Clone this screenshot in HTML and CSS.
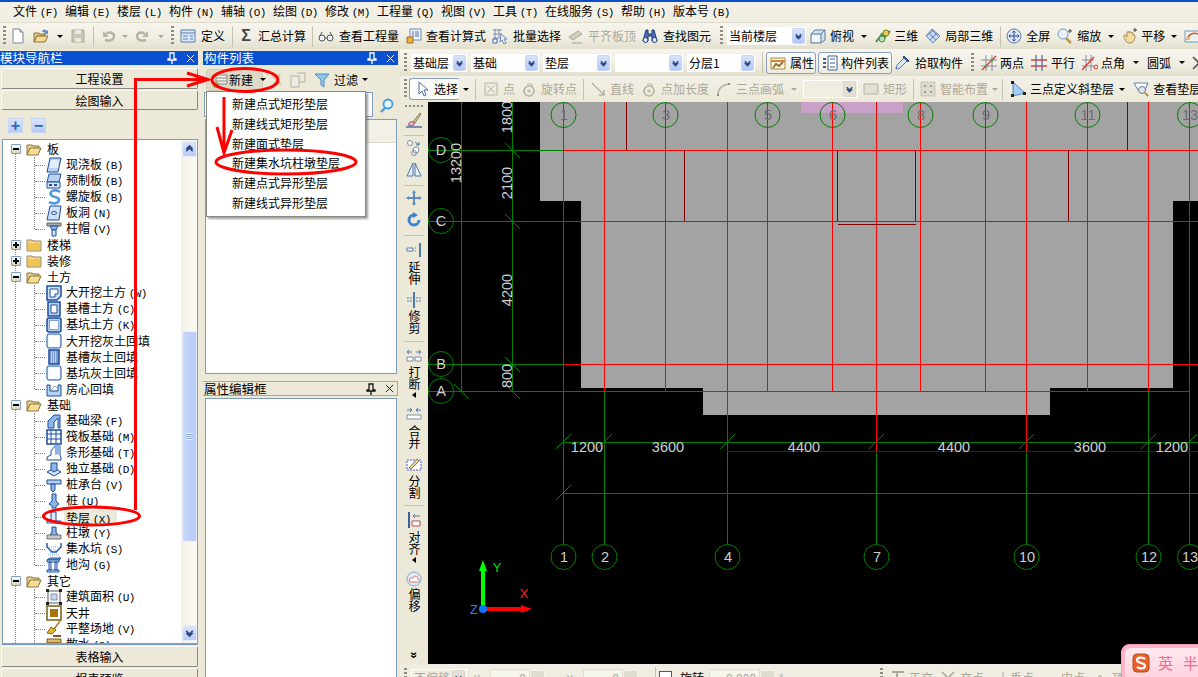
FILE: index.html
```html
<!DOCTYPE html>
<html lang="zh">
<head>
<meta charset="utf-8">
<title>模块导航栏</title>
<link rel="stylesheet" href="styles.css">
</head>
<body>
<svg class="defs" width="0" height="0">
  <defs>
    <symbol id="fo" viewBox="0 0 16 16"><path d="M1 14V4h5l1 1h6v3H4z" fill="#e9cf86" stroke="#8a7440"/><path d="M1 14l3-7h11l-3 7z" fill="#f7dd95" stroke="#8a7440"/></symbol>
    <symbol id="fc" viewBox="0 0 16 16"><path d="M1 14V3h5l1 1h8v10z" fill="#f4d98c" stroke="#9a8a60"/><path d="M2 6h12v7H2z" fill="#f2c552"/></symbol>
    <symbol id="chev" viewBox="0 0 12 12"><path d="M3 4l3 3 3-3M3 6l3 3 3-3" fill="none" stroke="#2d4a86" stroke-width="1.4"/></symbol>
    <symbol id="chup" viewBox="0 0 12 12"><path d="M3 6l3-3 3 3M3 8l3-3 3 3" fill="none" stroke="#2d4a86" stroke-width="1.4"/></symbol>
    <symbol id="pin" viewBox="0 0 10 12"><path d="M3 1h4v6h2v1H1V7h2zM5 8v4" fill="none" stroke="currentColor" stroke-width="1.3"/></symbol>
    <symbol id="cls" viewBox="0 0 10 10"><path d="M1 1l8 8M9 1L1 9" stroke="currentColor" fill="none"/></symbol>
    <symbol id="arc" viewBox="0 0 16 16"><circle cx="8" cy="10" r="5" fill="none" stroke="#b5b29f" stroke-width="1.6"/><path d="M6 3h5v3M6 10h4M8 8v4" stroke="#b5b29f" fill="none"/></symbol>
  </defs>
</svg>
<div class="app">
  <div class="menu">
    <span class="mi">文件 <span class="k">(F)</span></span>
    <span class="mi">编辑 <span class="k">(E)</span></span>
    <span class="mi">楼层 <span class="k">(L)</span></span>
    <span class="mi">构件 <span class="k">(N)</span></span>
    <span class="mi">辅轴 <span class="k">(O)</span></span>
    <span class="mi">绘图 <span class="k">(D)</span></span>
    <span class="mi">修改 <span class="k">(M)</span></span>
    <span class="mi mw3">工程量 <span class="k">(Q)</span></span>
    <span class="mi">视图 <span class="k">(V)</span></span>
    <span class="mi">工具 <span class="k">(T)</span></span>
    <span class="mi mw4">在线服务 <span class="k">(S)</span></span>
    <span class="mi">帮助 <span class="k">(H)</span></span>
    <span class="mi mw3">版本号 <span class="k">(B)</span></span>
  </div>

  <div class="tb tb1">
    <i class="grip ml3"></i>
    <svg class="ic ml4" viewBox="0 0 16 16"><path d="M3 1h7l3 3v11H3z" fill="#fff" stroke="#7a8694"/><path d="M10 1v3h3" fill="#dfe6ee" stroke="#7a8694"/></svg>
    <svg class="ic ml7" viewBox="0 0 16 16"><path d="M1 14V5h5l1 1h5v2H4z" fill="#e2c880" stroke="#8a7440"/><path d="M1 14l3-6h11l-3 6z" fill="#f5d98e" stroke="#8a7440"/><path d="M9 4c1-3 3-3 5-1l1-1v4h-4l1-1c-1-1-2-1-3-1z" fill="#5f8fcc"/></svg>
    <i class="caret ml8"></i>
    <svg class="ic ml8" viewBox="0 0 16 16"><path d="M2 2h12v12H2z" fill="#c9c7b8" stroke="#a9a796"/><path d="M5 2h6v4H5zM5 10h6v4H5z" fill="#e9e7dc"/></svg>
    <i class="sep ml7"></i>
    <svg class="ic ml7" viewBox="0 0 16 16"><path d="M4 12c6 2 9-1 9-4S8 3 5 6" fill="none" stroke="#b5b3a3" stroke-width="2.4"/><path d="M2 3v6h6z" fill="#b5b3a3"/></svg>
    <i class="caret off ml5"></i>
    <svg class="ic ml7" viewBox="0 0 16 16"><path d="M12 12c-6 2-9-1-9-4s5-5 8-2" fill="none" stroke="#b5b3a3" stroke-width="2.4"/><path d="M14 3v6H8z" fill="#b5b3a3"/></svg>
    <i class="caret off ml8"></i>
    <i class="grip ml8"></i>
    <span class="tool ml6 g5"><svg class="ic" viewBox="0 0 16 16"><path d="M1 2h14v12H1z" fill="#dce7f7" stroke="#5a7fb5"/><path d="M1 5h14M3 8h5M3 11h5M10 8h3M10 11h3" stroke="#5a7fb5" fill="none"/></svg><span>定义</span></span>
    <i class="sep ml7"></i>
    <span class="tool ml5"><span class="ic sigma">Σ</span><span>汇总计算</span></span>
    <i class="sep ml6"></i>
    <span class="tool ml5 g5"><svg class="ic" viewBox="0 0 16 16"><circle cx="4" cy="10" r="3" fill="#eef2f6" stroke="#555"/><circle cx="12" cy="10" r="3" fill="#eef2f6" stroke="#555"/><path d="M7 10h2M2 8l2-4M14 8l-2-4" stroke="#555" fill="none"/></svg><span>查看工程量</span></span>
    <span class="tool ml7"><svg class="ic" viewBox="0 0 16 16"><path d="M4 1h11v11H4z" fill="#eef3fa" stroke="#6d8cb8"/><path d="M6 4h2M9 4h4M6 6h2M9 6h4M6 8h2M9 8h4" stroke="#4e6fa5"/><path d="M1 9h6v6H1z" fill="#f0b040" stroke="#9c6a20"/></svg><span>查看计算式</span></span>
    <span class="tool ml6 g5"><svg class="ic" viewBox="0 0 16 16"><path d="M1 2h9M1 6h9M1 10h9M3 1v12M7 1v8" stroke="#7e8eb0" fill="none"/><path d="M1 11h4v4H1z" fill="#fff" stroke="#3c62b8"/><path d="M9 6l6 5h-3l2 4-2 1-2-4-2 2z" fill="#eaf1fb" stroke="#6d87b8"/></svg><span>批量选择</span></span>
    <span class="tool ml7 off"><svg class="ic" viewBox="0 0 16 16"><path d="M1 9l9-6 4 3-9 6z" fill="#d0cebf" stroke="#aca899"/><path d="M4 14h10v2H4z" fill="#c5c3b3"/></svg><span>平齐板顶</span></span>
    <span class="tool ml6 g5"><svg class="ic" viewBox="0 0 16 16"><path d="M4 2h2v4h4V2h2l3 11h-5V8H6v5H1z" fill="#4c6fb8" stroke="#213a78"/><circle cx="3.5" cy="12" r="2.5" fill="#dde7f8" stroke="#213a78"/><circle cx="12.5" cy="12" r="2.5" fill="#dde7f8" stroke="#213a78"/></svg><span>查找图元</span></span>
    <i class="grip ml9"></i>
    <span class="combo ml4 cw79">当前楼层<b><svg viewBox="0 0 12 12"><use href="#chev"/></svg></b></span>
    <span class="tool ml4"><svg class="ic" viewBox="0 0 16 16"><path d="M1 6l4-4h10v10l-4 3H1z" fill="#cfe0f2" stroke="#627d99"/><path d="M1 6h10v9M11 6l4-4" fill="none" stroke="#627d99"/><path d="M2 7h8v7H2z" fill="#eef5fb"/></svg><span>俯视</span></span>
    <i class="caret ml7"></i>
    <span class="tool ml9 g3"><svg class="ic" viewBox="0 0 16 16"><path d="M1 14l6-8 3 3 5-6" fill="none" stroke="#4a8f4a" stroke-width="2"/><circle cx="11" cy="5" r="3" fill="#e8cf50" stroke="#8a7a20"/><circle cx="7" cy="11" r="3" fill="#b9dcb0" stroke="#4a8f4a"/></svg><span>三维</span></span>
    <span class="tool ml7"><svg class="ic" viewBox="0 0 16 16"><path d="M1 8l6-7 8 7-7 7z" fill="#c7d8ef" stroke="#6a88b4"/><path d="M4 5l7 7M7 2l6 6M1 8l8-6M5 12l7-7" stroke="#6a88b4"/></svg><span>局部三维</span></span>
    <i class="sep ml7"></i>
    <span class="tool ml5"><svg class="ic" viewBox="0 0 16 16"><circle cx="8" cy="8" r="7" fill="#dce6f4" stroke="#5d79a8"/><path d="M8 3v10M3 8h10M6.5 4.500L8 3l1.500 1.500M6.500 11.500L8 13l1.500-1.500M4.500 6.500L3 8l1.500 1.500M11.500 6.500L13 8l-1.500 1.500" stroke="#2d4a86" fill="none"/></svg><span>全屏</span></span>
    <span class="tool ml7"><svg class="ic" viewBox="0 0 16 16"><circle cx="6" cy="6" r="5" fill="#e8f0fb" stroke="#7c96bd"/><path d="M9 10l5 5" stroke="#c9923c" stroke-width="2.500"/><path d="M13 1v4M11 3h4" stroke="#444"/></svg><span>缩放</span></span>
    <i class="caret ml7"></i>
    <span class="tool ml9 g3"><svg class="ic" viewBox="0 0 16 16"><path d="M2 9c-1-2 1-3 2-1l1 1V5c0-2 2-2 2 0 0-2 2-2 2 0 0-1 2-1 2 0v2c2-1 2 1 2 1 0 4-2 7-5 7-4 0-5-3-6-6z" fill="#f0dca4" stroke="#a58a4c"/><path d="M13 0v4M11 2h4" stroke="#444"/></svg><span>平移</span></span>
    <i class="caret ml6"></i>
    <svg class="ic ml8" viewBox="0 0 16 16"><path d="M1 3h14v11H1z" fill="#eaf5ef" stroke="#6a9ec0"/><path d="M3 12c1-6 7-8 11-6" fill="none" stroke="#d85a3c" stroke-width="1.500"/><path d="M3 12h3v-3H3z" fill="#e8c040"/></svg>
  </div>

  <div class="main">
    <aside class="nav">
      <div class="cap"><span class="cap-t">模块导航栏</span><svg class="pin" viewBox="0 0 10 12"><use href="#pin"/></svg><svg class="cls" viewBox="0 0 10 10"><use href="#cls"/></svg></div>
      <div class="navbtn nb-first">工程设置</div>
      <div class="navbtn nb-second">绘图输入</div>
      <div class="treetb">
        <span class="sq">+</span>
        <span class="sq">−</span>
      </div>
      <div class="treebox">
        <div class="tree">
          <div class="node"><i class="exp"></i><svg class="ic fold"><use href="#fo"/></svg><span>板</span></div>
          <div class="kids">
            <div class="leaf"><svg class="ic" viewBox="0 0 16 16"><path d="M4 1h11l-3 14H1z" fill="#bcd2f2" stroke="#1a4e9e"/><path d="M5 3h8l-1 8H3z" fill="#e3eefc"/></svg><span>现浇板 <span class="k">(B)</span></span></div>
            <div class="leaf"><svg class="ic" viewBox="0 0 16 16"><path d="M3 1h12l-2 8H1z" fill="#bcd2f2" stroke="#1a4e9e"/><path d="M1 9h13v6H1z" fill="#dce9fa" stroke="#1a4e9e"/><path d="M3 11h3v2H3zM8 11h3v2H8z" fill="#1a4e9e"/></svg><span>预制板 <span class="k">(B)</span></span></div>
            <div class="leaf"><svg class="ic" viewBox="0 0 16 16"><path d="M14 3C8-1 3 3 5 6s8 1 8 5-7 4-10 2" fill="none" stroke="#4f9be0" stroke-width="2.600"/></svg><span>螺旋板 <span class="k">(B)</span></span></div>
            <div class="leaf"><svg class="ic" viewBox="0 0 16 16"><path d="M4 1h11l-2 14H1z" fill="#cfe0f7" stroke="#1a4e9e"/><ellipse cx="8" cy="8" rx="2.500" ry="1.500" fill="#fff" stroke="#1a4e9e"/></svg><span>板洞 <span class="k">(N)</span></span></div>
            <div class="leaf"><svg class="ic" viewBox="0 0 16 16"><path d="M1 2h14v3H1z" fill="#a9a9a9" stroke="#666"/><path d="M4 5h8l-2 4H6z" fill="#8fb4e8" stroke="#1a4e9e"/><path d="M6 9h4v6H6z" fill="#cfe0f7" stroke="#1a4e9e"/></svg><span>柱帽 <span class="k">(V)</span></span></div>
          </div>
          <div class="node"><i class="exp plus"></i><svg class="ic fold"><use href="#fc"/></svg><span>楼梯</span></div>
          <div class="node"><i class="exp plus"></i><svg class="ic fold"><use href="#fc"/></svg><span>装修</span></div>
          <div class="node"><i class="exp"></i><svg class="ic fold"><use href="#fo"/></svg><span>土方</span></div>
          <div class="kids">
            <div class="leaf"><svg class="ic" viewBox="0 0 16 16"><path d="M1 1h14v10l-4 4H1z" fill="#cfe0f7" stroke="#1a4e9e" stroke-width="1.500"/><path d="M4 4h8v5H9v3H4z" fill="#fff" stroke="#1a4e9e"/></svg><span>大开挖土方 <span class="k">(W)</span></span></div>
            <div class="leaf"><svg class="ic" viewBox="0 0 16 16"><path d="M2 1h12v14H2z" fill="#b7cff0" stroke="#1a4e9e" stroke-width="1.500"/><path d="M5 4h6v8H5z" fill="#fff" stroke="#1a4e9e"/></svg><span>基槽土方 <span class="k">(C)</span></span></div>
            <div class="leaf"><svg class="ic" viewBox="0 0 16 16"><rect x="1" y="1" width="14" height="14" rx="2" fill="#b7cff0" stroke="#1a4e9e" stroke-width="1.500"/><rect x="3.500" y="3.500" width="9" height="9" fill="#fff" stroke="#7fa4da"/></svg><span>基坑土方 <span class="k">(K)</span></span></div>
            <div class="leaf"><svg class="ic" viewBox="0 0 16 16"><rect x="1" y="1" width="14" height="14" rx="2" fill="#f0f5fd" stroke="#1a4e9e"/><rect x="3" y="3" width="10" height="10" fill="#fff"/></svg><span>大开挖灰土回填</span></div>
            <div class="leaf"><svg class="ic" viewBox="0 0 16 16"><path d="M3 1h10v14H3z" fill="#7f9ccc" stroke="#1a4e9e" stroke-width="1.500"/><path d="M5 3h6M5 5h6M5 7h6M5 9h6M5 11h6M5 13h6" stroke="#fff" stroke-dasharray="1 1"/></svg><span>基槽灰土回填</span></div>
            <div class="leaf"><svg class="ic" viewBox="0 0 16 16"><rect x="1" y="1" width="14" height="14" rx="2" fill="#f0f5fd" stroke="#1a4e9e"/><rect x="3" y="3" width="10" height="10" fill="#fff"/></svg><span>基坑灰土回填</span></div>
            <div class="leaf"><svg class="ic" viewBox="0 0 16 16"><path d="M1 4h3v6h8V4h3v11H1z" fill="#b7cff0" stroke="#1a4e9e"/><path d="M5 9l4-4 2 2" stroke="#8ea8cf" fill="none"/></svg><span>房心回填</span></div>
          </div>
          <div class="node"><i class="exp"></i><svg class="ic fold"><use href="#fo"/></svg><span>基础</span></div>
          <div class="kids">
            <div class="leaf"><svg class="ic" viewBox="0 0 16 16"><path d="M2 15V8l6-6h6v13h-2V5l-4 4v6z" fill="#8fb4e8" stroke="#1a4e9e"/></svg><span>基础梁 <span class="k">(F)</span></span></div>
            <div class="leaf"><svg class="ic" viewBox="0 0 16 16"><path d="M1 1h14v14H1z" fill="#fff" stroke="#1a4e9e" stroke-width="1.500"/><path d="M1 5h14M1 10h14M5 1v14M10 1v14" stroke="#1a4e9e"/></svg><span>筏板基础 <span class="k">(M)</span></span></div>
            <div class="leaf"><svg class="ic" viewBox="0 0 16 16"><path d="M1 15v-3l4-2V6l4-5h5v10l1 1v3z" fill="#fff" stroke="#1a4e9e"/><path d="M9 1l5 0v8l-5 1z" fill="#8fb4e8"/></svg><span>条形基础 <span class="k">(T)</span></span></div>
            <div class="leaf"><svg class="ic" viewBox="0 0 16 16"><path d="M1 11l7-4 7 4-7 4z" fill="#cfe0f7" stroke="#1a4e9e"/><path d="M5 2h6v7l-3 2-3-2z" fill="#8fb4e8" stroke="#1a4e9e"/></svg><span>独立基础 <span class="k">(D)</span></span></div>
            <div class="leaf"><svg class="ic" viewBox="0 0 16 16"><path d="M1 3h14v4H1z" fill="#b7cff0" stroke="#1a4e9e"/><path d="M5 7h4v6l-2 2-2-2z" fill="#8fb4e8" stroke="#1a4e9e"/></svg><span>桩承台 <span class="k">(V)</span></span></div>
            <div class="leaf"><svg class="ic" viewBox="0 0 16 16"><path d="M6 1h4v7l3 3-3 2v2H6v-2l-3-2 3-3z" fill="#8fb4e8" stroke="#1a4e9e"/></svg><span>桩 <span class="k">(U)</span></span></div>
            <div class="leaf sel"><svg class="ic" viewBox="0 0 16 16"><path d="M1 12h14v2H1z" fill="#fff" stroke="#1a4e9e"/><path d="M5 3h5v9H5z" fill="#dce9fa" stroke="#1a4e9e"/></svg><span class="hl">垫层 <span class="k">(X)</span></span></div>
            <div class="leaf"><svg class="ic" viewBox="0 0 16 16"><path d="M6 2h4v5l2 3H4l2-3z" fill="#8fb4e8" stroke="#1a4e9e"/><path d="M1 10h14v4H1z" fill="#c8c8c8" stroke="#777"/></svg><span>柱墩 <span class="k">(Y)</span></span></div>
            <div class="leaf"><svg class="ic" viewBox="0 0 16 16"><path d="M1 2v4l5 5h4l5-5V2" fill="none" stroke="#1a4e9e" stroke-width="1.400"/><path d="M2 14h12M4 12h8M5 9h6M3 6h10" stroke="#6ea8e8" stroke-dasharray="1 1"/></svg><span>集水坑 <span class="k">(S)</span></span></div>
            <div class="leaf"><svg class="ic" viewBox="0 0 16 16"><path d="M1 3l3-2h11l-2 2z" fill="#8fb4e8" stroke="#1a4e9e"/><path d="M1 3h12v2H1zM3 5h2v8H3zM9 5h2v8H9zM1 13h12v2H1z" fill="#dce9fa" stroke="#1a4e9e"/></svg><span>地沟 <span class="k">(G)</span></span></div>
          </div>
          <div class="node"><i class="exp"></i><svg class="ic fold"><use href="#fo"/></svg><span>其它</span></div>
          <div class="kids">
            <div class="leaf"><svg class="ic" viewBox="0 0 16 16"><path d="M2 2h12v12H2z" fill="#fff" stroke="#555"/><path d="M5 5h6v6H5z" fill="#c9d6ea" stroke="#7f93b4"/><path d="M0 0h3v3H0zM13 0h3v3h-3zM0 13h3v3H0zM13 13h3v3h-3z" fill="#222"/></svg><span>建筑面积 <span class="k">(U)</span></span></div>
            <div class="leaf"><svg class="ic" viewBox="0 0 16 16"><path d="M1 1h14v14H1z" fill="#fff" stroke="#7a5a10" stroke-width="1.500"/><path d="M4 4h8v8H4z" fill="#a8740f"/></svg><span>天井</span></div>
            <div class="leaf"><svg class="ic" viewBox="0 0 16 16"><path d="M14 0L8 8" stroke="#a5752a" stroke-width="1.500"/><path d="M5 6l5 3-4 4-5-1z" fill="#e2ba2e" stroke="#8a6a10"/><path d="M7 14h8v2H7z" fill="#6e5a30"/></svg><span>平整场地 <span class="k">(V)</span></span></div>
            <div class="leaf"><svg class="ic" viewBox="0 0 16 16"><path d="M1 2h14v4H1z" fill="#d8b878" stroke="#7a5a10"/><path d="M3 6h10v9H3z" fill="#fff" stroke="#7a5a10"/></svg><span>散水 <span class="k">(S)</span></span></div>
          </div>
        </div>
        <div class="sb">
          <span class="sb-btn"><svg viewBox="0 0 12 12"><use href="#chup"/></svg></span>
          <span class="sb-thumb"><i></i></span>
          <span class="sb-btn sb-down"><svg viewBox="0 0 12 12"><use href="#chev"/></svg></span>
        </div>
      </div>
      <div class="navbtn nb-third">表格输入</div>
      <div class="navbtn nb-fourth">报表预览</div>
    </aside>

    <section class="list">
      <div class="cap"><span class="cap-t">构件列表</span><svg class="pin" viewBox="0 0 10 12"><use href="#pin"/></svg><svg class="cls" viewBox="0 0 10 10"><use href="#cls"/></svg></div>
      <div class="listtb">
        <span class="newbtn"><svg class="ic" viewBox="0 0 16 16"><path d="M3 3h11v9H3z" fill="#f0f0ea" stroke="#8a8a80"/><path d="M3 6h11M3 9h11" stroke="#8a8a80"/><path d="M1 11h4v4H1z" fill="#f2d64a" stroke="#8a7a20"/></svg><span>新建</span><i class="caret ml7"></i></span>
        <svg class="ic ml5" viewBox="0 0 16 16"><path d="M4 3l9 10M12 2L5 14" stroke="#c9c7b8" stroke-width="1.800"/></svg>
        <svg class="ic ml6" viewBox="0 0 16 16"><path d="M1 4h8v11H1z" fill="#eeece0" stroke="#b5b3a3"/><path d="M7 1h8v9H9" fill="none" stroke="#b5b3a3"/></svg>
        <span class="tool ml8"><svg class="ic" viewBox="0 0 16 16"><path d="M1 2h14l-5 6v7l-3-2V8z" fill="#8fc7ea" stroke="#4f8cc0"/></svg><span>过滤</span></span>
        <i class="caret ml4"></i>
      </div>
      <div class="searchrow">
        <span class="search"></span>
        <svg class="ic ml6" viewBox="0 0 16 16"><circle cx="9" cy="6" r="4.500" fill="#e8f4fc" stroke="#3e9ce0" stroke-width="1.800"/><path d="M6 10l-4 4" stroke="#3e9ce0" stroke-width="2.400"/></svg>
      </div>
      <div class="listbox"><div class="listhead"></div></div>
      <div class="cap cap-light"><span class="cap-t">属性编辑框</span><svg class="pin" viewBox="0 0 10 12"><use href="#pin"/></svg><svg class="cls" viewBox="0 0 10 10"><use href="#cls"/></svg></div>
      <div class="propbox"></div>
    </section>

    <section class="work">
      <div class="tb tb2">
        <i class="grip ml4"></i>
        <span class="combo ml4 cw56">基础层<b><svg viewBox="0 0 12 12"><use href="#chev"/></svg></b></span>
        <span class="combo ml4 cw68">基础<b><svg viewBox="0 0 12 12"><use href="#chev"/></svg></b></span>
        <span class="combo ml4 cw68">垫层<b><svg viewBox="0 0 12 12"><use href="#chev"/></svg></b></span>
        <span class="combo ml4 cw68"><b><svg viewBox="0 0 12 12"><use href="#chev"/></svg></b></span>
        <span class="combo ml4 cw68">分层1<b><svg viewBox="0 0 12 12"><use href="#chev"/></svg></b></span>
        <i class="sep ml7"></i>
        <span class="tab ml3 tw50"><svg class="ic" viewBox="0 0 16 16"><path d="M1 3h14v11H1z" fill="#fdf6df" stroke="#a88a3c"/><path d="M1 6h14" stroke="#d8823c" stroke-width="2"/><path d="M3 13l3-4 3 2 4-4" stroke="#8a7430" stroke-width="1.800" fill="none"/></svg><span>属性</span></span>
        <span class="tab ml2 tw74 g2"><svg class="ic" viewBox="0 0 16 16"><path d="M6 1h9v14H6z" fill="#fff" stroke="#3c5e96"/><path d="M8 4h5M8 8h5M8 12h5" stroke="#3c5e96"/><path d="M1 3h3v2H1zM1 7h3v2H1zM1 11h3v2H1z" fill="#3c5e96"/></svg><span>构件列表</span></span>
        <span class="tool ml2 g5"><svg class="ic" viewBox="0 0 16 16"><path d="M2 14l1-4 7-7 3 3-7 7z" fill="#dbe8f8" stroke="#4f77b0"/><path d="M9 2l1-1 5 5-1 1z" fill="#3f6fb4" stroke="#2b4f88"/></svg><span>拾取构件</span></span>
        <i class="grip ml8"></i>
        <span class="tool ml7 g3"><svg class="ic" viewBox="0 0 16 16"><path d="M0 5h16M0 11h16M5 0v16M11 0v16" stroke="#8a8aa0"/><path d="M1 15L15 1" stroke="#e0302a" stroke-width="1.200"/><circle cx="5" cy="11" r="1.500" fill="#4a9a4a"/><circle cx="11" cy="5" r="1.500" fill="#4a9a4a"/></svg><span>两点</span></span>
        <span class="tool ml7"><svg class="ic" viewBox="0 0 16 16"><path d="M0 5h16M0 11h16" stroke="#d8423c" stroke-width="1.300"/><path d="M5 0v16M11 0v16" stroke="#5a6ea8" stroke-width="1.300"/></svg><span>平行</span></span>
        <span class="tool ml7 g3"><svg class="ic" viewBox="0 0 16 16"><path d="M0 5h12M0 11h12M4 0v16M9 0v16" stroke="#8a8aa0"/><path d="M0 15L12 2" stroke="#e0302a" stroke-width="1.200"/><circle cx="14" cy="12" r="2" fill="none" stroke="#e0302a"/></svg><span>点角</span></span>
        <i class="caret ml8"></i>
        <span class="ml9">圆弧</span>
        <i class="caret ml8"></i>
        <svg class="ic ml7" viewBox="0 0 16 16"><path d="M2 2l6 6-6 6M14 2L8 8" fill="none" stroke="#555" stroke-width="1.600"/></svg>
      </div>

      <div class="tb tb3">
        <i class="grip ml4"></i>
        <span class="tab ml2 tw51 picked"><svg class="ic" viewBox="0 0 16 16"><path d="M3 1l9 8H8l2 5-2 1-2-5-3 3z" fill="#fff" stroke="#4f6fa5"/></svg><span>选择</span></span>
        <i class="caret ml3"></i>
        <i class="sep ml7"></i>
        <span class="tool ml7 off"><svg class="ic" viewBox="0 0 16 16"><path d="M2 2h12v12H2z" fill="none" stroke="#b5b3a3"/><path d="M4 4l8 8M12 4l-8 8" stroke="#b5b3a3"/></svg><span>点</span></span>
        <span class="tool ml6 off"><svg class="ic"><use href="#arc"/></svg><span>旋转点</span></span>
        <i class="sep ml6"></i>
        <span class="tool ml6 off"><svg class="ic" viewBox="0 0 16 16"><path d="M2 2l12 12M9 14h5V9" fill="none" stroke="#b5b3a3" stroke-width="1.400"/></svg><span>直线</span></span>
        <span class="tool ml7 off"><svg class="ic"><use href="#arc"/></svg><span>点加长度</span></span>
        <span class="tool ml7 off"><svg class="ic" viewBox="0 0 16 16"><path d="M2 14C2 8 6 4 13 3" fill="none" stroke="#b5b3a3" stroke-width="1.400"/><path d="M1 13h2v2H1zM12 2h2v2h-2z" fill="#8a8a80"/></svg><span>三点画弧</span></span>
        <i class="caret off ml7"></i>
        <span class="combo ml7 cw55 dis"><b><svg viewBox="0 0 12 12"><use href="#chev"/></svg></b></span>
        <span class="tool ml5 off"><svg class="ic" viewBox="0 0 16 16"><path d="M1 3h14v10H1z" fill="#e2e0d2" stroke="#b5b3a3"/></svg><span>矩形</span></span>
        <i class="sep ml6"></i>
        <span class="tool ml6 off"><svg class="ic" viewBox="0 0 16 16"><path d="M1 1h14v14H1z" fill="#dddbcc" stroke="#aca899" stroke-dasharray="1 1"/><path d="M4 5h2M10 5h2M5 4v2M11 4v2M4 11h2M10 11h2M5 10v2M11 10v2" stroke="#8a8a80"/></svg><span>智能布置</span></span>
        <i class="caret off ml4"></i>
        <i class="sep ml5"></i>
        <span class="tool ml7"><svg class="ic" viewBox="0 0 16 16"><path d="M3 1l12 11-12 3z" fill="#a9cdf2" stroke="#4f86c8"/><path d="M1 0h3v3H1zM13 11h3v3h-3zM1 13h3v3H1z" fill="#222"/></svg><span>三点定义斜垫层</span></span>
        <i class="caret ml5"></i>
        <span class="tool ml9"><svg class="ic" viewBox="0 0 16 16"><path d="M1 2h14l-3 7H5z" fill="#fff" stroke="#5a7fb5"/><circle cx="9" cy="9" r="3.500" fill="#dce9fa" stroke="#777"/><path d="M12 12l3 3" stroke="#c9823c" stroke-width="2"/></svg><span>查看垫层</span></span>
      </div>

      <div class="stage">
        <div class="strip">
          <i class="hgrip mt3"></i>
          <svg class="ic mt5" viewBox="0 0 16 16"><path d="M7 10l7-9 1 1-6 9z" fill="#d8cfa8" stroke="#8a7a4a"/><path d="M3 11c3-3 6-1 5 2-2 1-5 1-6 0z" fill="#e8aac0" stroke="#a06070"/><path d="M0 15h16" stroke="#4f6fa5" stroke-width="1.500"/></svg>
          <i class="hsep mt7"></i>
          <svg class="ic mt4" viewBox="0 0 16 16"><circle cx="4" cy="3" r="2.500" fill="#fff" stroke="#7f8ea8"/><circle cx="10" cy="10" r="3" fill="#fff" stroke="#7f8ea8"/><circle cx="8" cy="13" r="2.500" fill="none" stroke="#7f8ea8"/><path d="M9 2l4 3M13 2v3h-3" stroke="#4f6fa5" fill="none"/></svg>
          <svg class="ic mt5" viewBox="0 0 16 16"><path d="M7 2L1 15h6zM9 2l6 13H9z" fill="#e8f0fb" stroke="#4f77b0"/></svg>
          <i class="hsep mt8"></i>
          <svg class="ic mt4" viewBox="0 0 16 16"><path d="M8 0l2 3H9v4h4V6l3 2-3 2V9H9v4h1l-2 3-2-3h1V9H3v1L0 8l3-2v1h4V3H6z" fill="#5a8fc8"/></svg>
          <svg class="ic mt6" viewBox="0 0 16 16"><path d="M13 8A5 5 0 1 1 8 3" fill="none" stroke="#3f82d4" stroke-width="3"/><path d="M7 0l5 3-5 3z" fill="#3f82d4"/></svg>
          <i class="hsep mt7"></i>
          <svg class="ic mt6" viewBox="0 0 16 16"><path d="M1 6h6v3H1z" fill="#fff" stroke="#4f77b0"/><path d="M9 6h2M9 9h2" stroke="#4f77b0" stroke-dasharray="1 1"/><path d="M14 1v14" stroke="#4f77b0" stroke-width="2"/></svg>
          <span class="vt mt3">延伸</span>
          <svg class="ic mt7" viewBox="0 0 16 16"><path d="M1 6h6M1 9h6M10 6h5M10 9h5" stroke="#4f77b0" stroke-dasharray="2 1"/><path d="M8 0v16" stroke="#4f77b0" stroke-width="2"/></svg>
          <span class="vt mt2">修剪</span>
          <i class="hsep mt7"></i>
          <svg class="ic mt6" viewBox="0 0 16 16"><path d="M1 4h5M3 2L1 4l2 2M10 4h5M13 2l2 2-2 2" stroke="#4f77b0" fill="none"/><path d="M1 9h6v4H1zM9 9h6v4H9z" fill="#fff" stroke="#7f8ea8"/></svg>
          <span class="vt mt2">打断</span>
          <i class="lcaret mt2"></i>
          <svg class="ic mt8" viewBox="0 0 16 16"><path d="M1 4h5M4 2l2 2-2 2M15 4h-5M12 2l-2 2 2 2" stroke="#4f77b0" fill="none"/><path d="M1 9h14v4H1z" fill="#fff" stroke="#7f8ea8"/></svg>
          <span class="vt mt3">合并</span>
          <svg class="ic mt7" viewBox="0 0 16 16"><path d="M1 4h14v10H1z" fill="#fff" stroke="#3c62d8" stroke-dasharray="2 1"/><path d="M3 12l8-9 2 2-8 8z" fill="#e0d4a0" stroke="#8a7a4a"/></svg>
          <span class="vt mt3">分割</span>
          <i class="hsep mt6"></i>
          <svg class="ic mt6" viewBox="0 0 16 16"><path d="M2 0h2v16H2z" fill="#3c5e96"/><path d="M6 9h8v5H6z" fill="#fff" stroke="#b05050"/><path d="M14 4H7M9 2L7 4l2 2" stroke="#4f77b0" fill="none"/></svg>
          <span class="vt mt3">对齐</span>
          <i class="lcaret mt2"></i>
          <svg class="ic mt8" viewBox="0 0 16 16"><circle cx="8" cy="8" r="7" fill="#dfe8f2" stroke="#8ea8c4"/><path d="M4 11c-2-3 1-5 3-4 1-3 5-2 5 1 2 1 1 3 0 3z" fill="#fff" stroke="#e07070"/></svg>
          <span class="vt mt1">偏移</span>
          <span class="dchev">»</span>
        </div>
        <svg class="cad" width="770" height="562" viewBox="428 102 770 562">
          <path class="floor" d="M540 102H1198V201H1173V388H1050V415H703V388H581V201H540z"/>
          <rect class="pink" x="801" y="102" width="102" height="11"/>
          <path class="gl" d="M461.500 102V391M512.500 102V391M428 150.500H563M428 221.500H563M428 364.500H563M428 391.500H563M563.500 391V544M604.500 391V544M1148.500 391V544M1189.500 391V544M727.500 451V544M876.500 451V544M1026.500 451V544M563 442.500H1198M563 493.500H1198"/>
          <path class="gl tick" d="M505 143l15 15M505 214l15 15M505 357l15 15M505 384l15 15M454 384l15 15M556 449l15-15M597 449l15-15M720 449l15-15M869 449l15-15M1019 449l15-15M1141 449l15-15M1182 449l15-15M556 500l15-15"/>
          <path class="rl" d="M563.500 102V391M604.500 102V391M665.500 102V391M767.500 102V391M832.500 102V391M920.500 102V391M985.500 102V391M1087.500 102V391M1148.500 102V391M1189.500 102V391M727.500 102V451M876.500 102V451M1026.500 102V451M563 150.500H1198M563 221.500H1198M563 364.500H1198M563 391.500H1189"/>
          <path class="dl" d="M626.500 102V150M684.500 150V221M837.500 150V221M915.500 150V221M838 224.500H916M1068.500 150V221M1127.500 102V150M727 451.500H1198"/>
          <g class="circ">
            <circle cx="563.500" cy="115" r="12.500"/><circle cx="665.500" cy="115" r="12.500"/><circle cx="767.500" cy="115" r="12.500"/><circle cx="832.500" cy="115" r="12.500"/><circle cx="920.500" cy="115" r="12.500"/><circle cx="985.500" cy="115" r="12.500"/><circle cx="1087.500" cy="115" r="12.500"/><circle cx="1190" cy="115" r="12.500"/>
            <circle cx="441" cy="150" r="12.500"/><circle cx="441" cy="221" r="12.500"/><circle cx="441" cy="364" r="12.500"/><circle cx="441" cy="391" r="12.500"/>
            <circle cx="563.500" cy="557" r="12.500"/><circle cx="604.500" cy="557" r="12.500"/><circle cx="727.500" cy="557" r="12.500"/><circle cx="876.500" cy="557" r="12.500"/><circle cx="1026.500" cy="557" r="12.500"/><circle cx="1148.500" cy="557" r="12.500"/><circle cx="1190" cy="557" r="12.500"/>
          </g>
          <g class="lbl dim">
            <text x="564" y="120">1</text><text x="666" y="120">3</text><text x="768" y="120">5</text><text x="833" y="120">6</text><text x="921" y="120">8</text><text x="986" y="120">9</text><text x="1088" y="120">11</text><text x="1190" y="120">13</text>
          </g>
          <g class="lbl">
            <text x="441" y="155">D</text><text x="441" y="226">C</text><text x="441" y="369">B</text><text x="441" y="396">A</text>
            <text x="564" y="562">1</text><text x="605" y="562">2</text><text x="728" y="562">4</text><text x="877" y="562">7</text><text x="1027" y="562">10</text><text x="1149" y="562">12</text><text x="1190" y="562">13</text>
            <text x="587" y="452">1200</text><text x="668" y="452">3600</text><text x="804" y="452">4400</text><text x="954" y="452">4400</text><text x="1090" y="452">3600</text><text x="1172" y="452">1200</text>
            <text transform="translate(512 117) rotate(-90)">1800</text>
            <text transform="translate(461 163) rotate(-90)">13200</text>
            <text transform="translate(512 183) rotate(-90)">2100</text>
            <text transform="translate(512 290) rotate(-90)">4200</text>
            <text transform="translate(512 376) rotate(-90)">800</text>
          </g>
          <path class="ax-g" d="M483 609V566"/>
          <path class="fill-g" d="M483 560l4 11h-8z"/>
          <path class="ax-r" d="M483 609H524"/>
          <path class="fill-r" d="M532 609l-11-4v8z"/>
          <circle class="fill-b" cx="483" cy="609" r="4"/>
          <text class="ax ax-y" x="497" y="572">Y</text>
          <text class="ax ax-x" x="524" y="598">X</text>
          <text class="ax ax-z" x="474" y="614">Z</text>
        </svg>
      </div>

      <div class="status">
        <i class="grip ml4"></i>
        <span class="combo ml4 cw56 dis">不偏移<b><svg viewBox="0 0 12 12"><use href="#chev"/></svg></b></span>
        <span class="off lab ml7">Y=</span>
        <span class="num ml2 nw40">0</span><span class="step"></span>
        <span class="off lab ml2">mm</span>
        <span class="off lab ml6">Y=</span>
        <span class="num ml2 nw40">0</span><span class="step"></span>
        <span class="off lab ml2">mm</span>
        <i class="sep ml1"></i>
        <i class="check ml3"></i>
        <span class="ml8">旋转</span>
        <span class="num ml5 nw51">0.000</span><span class="step"></span>
        <span class="off deg ml4">°</span>
        <i class="grip mlbig"></i>
        <span class="tool ml7 off g3"><svg class="ic" viewBox="0 0 16 16"><path d="M2 2h12M7 2v13" stroke="#aca899" stroke-width="2" fill="none"/></svg><span>正交</span></span>
        <span class="tool ml7 off"><svg class="ic" viewBox="0 0 16 16"><path d="M2 2l12 12M14 2L2 14" stroke="#aca899" stroke-width="1.500"/></svg><span>交点</span></span>
        <span class="tool ml7 off g3"><svg class="ic" viewBox="0 0 16 16"><path d="M12 2v12" stroke="#aca899"/></svg><span>垂点</span></span>
        <span class="tool ml7 off"><svg class="ic" viewBox="0 0 16 16"><path d="M6 8h6" stroke="#aca899"/></svg><span>中点</span></span>
        <span class="tool ml7 off"><svg class="ic" viewBox="0 0 16 16"><path d="M2 12l6-7 6 7" stroke="#aca899" fill="none"/></svg><span>顶点</span></span>
      </div>
    </section>
  </div>

  <div class="drop">
    <div class="drop-i">新建点式矩形垫层</div>
    <div class="drop-i">新建线式矩形垫层</div>
    <div class="drop-i">新建面式垫层</div>
    <div class="drop-i">新建集水坑柱墩垫层</div>
    <div class="drop-i">新建点式异形垫层</div>
    <div class="drop-i">新建线式异形垫层</div>
  </div>

  <svg class="marks" width="1198" height="677" viewBox="0 0 1198 677">
    <path d="M135.500 510V79.500H207M187 73l21 6.500-21 6.500M224 97V153M217 127l7 26 8-23"/>
    <ellipse cx="245" cy="80" rx="33" ry="11.500"/>
    <ellipse cx="286" cy="162" rx="70" ry="12"/>
    <ellipse cx="91.500" cy="516" rx="48" ry="9"/>
  </svg>

  <div class="ime">
    <div class="ime-in">
      <svg class="ime-s" viewBox="0 0 18 20"><rect x="1" y="1" width="16" height="18" rx="4" fill="#e8622a" stroke="#b84a18"/><path d="M13 6c-2-2-8-2-8 1 0 4 8 2 8 6 0 3-6 3-8 1" fill="none" stroke="#fff" stroke-width="2.200"/></svg>
      <span class="ime-t">英</span>
      <span class="ime-t ime-last">半</span>
    </div>
  </div>
</div>
</body>
</html>
```

FILE: styles.css
```css
* { box-sizing: border-box; }
html, body { margin: 0; padding: 0; width: 1198px; height: 677px; overflow: hidden; }
body { font: 12px/16px "Noto Sans CJK SC", "Liberation Sans", sans-serif; color: #000; background: #ece9d8; }
i { font-style: normal; display: block; flex: none; }
.defs { position: absolute; }
.app { position: relative; width: 1198px; height: 677px; overflow: hidden; border-top: 2px solid #0a4fc8; display: flex; flex-direction: column; }
.k { font: 11px/16px "Liberation Mono", monospace; letter-spacing: -0.6px; }

/* margin helpers */
.ml1 { margin-left: 1px; } .ml2 { margin-left: 2px; } .ml3 { margin-left: 3px; } .ml4 { margin-left: 4px; } .ml5 { margin-left: 5px; }
.ml6 { margin-left: 6px; } .ml7 { margin-left: 7px; } .ml8 { margin-left: 8px; } .ml9 { margin-left: 9px; }
.mt1 { margin-top: 1px; } .mt2 { margin-top: 2px; } .mt3 { margin-top: 3px; } .mt4 { margin-top: 4px; } .mt5 { margin-top: 5px; }
.mt6 { margin-top: 6px; } .mt7 { margin-top: 7px; } .mt8 { margin-top: 8px; } .mt9 { margin-top: 9px; } .mt10 { margin-top: 10px; }

/* menu */
.menu { height: 20px; flex: none; display: flex; align-items: center; padding-left: 13px; background: #f2f0e5; white-space: nowrap; }
.mi { width: 52px; flex: none; }
.mw3 { width: 64px; }
.mw4 { width: 76px; }

/* toolbars */
.tb { flex: none; display: flex; align-items: center; white-space: nowrap; overflow: hidden; background: linear-gradient(#f6f4ec, #f1efe4 55%, #e2dfcc); }
.tb1 { height: 27px; border-top: 1px solid #dedbc8; }
.tb2 { height: 27px; width: 798px; }
.tb3 { height: 26px; width: 798px; background: linear-gradient(#f3f1e8, #ece9d8); }
.ic { width: 16px; height: 16px; flex: none; display: block; }
.grip { width: 3px; height: 20px; background: repeating-linear-gradient(#8f8d7e 0 2px, transparent 2px 4px); }
.sep { width: 1px; height: 21px; background: #c5c2ad; }
.caret { width: 0; height: 0; border: 3px solid transparent; border-top: 3px solid #000; border-bottom: 0; margin-right: -1px; }
.caret.off { border-top-color: #aca899; }
.tool { display: flex; align-items: center; gap: 4px; flex: none; }
.g5 { gap: 5px; }
.g3 { gap: 3px; }
.off { color: #aca899; }
.sigma { font: bold 16px/16px "Liberation Sans", sans-serif; color: #444; text-align: center; }
.combo { height: 18px; flex: none; display: flex; align-items: center; background: #fff; padding-left: 2px; overflow: hidden; }
.combo b { margin-left: auto; width: 13px; height: 16px; margin-right: 1px; flex: none; background: linear-gradient(#d8e3fb, #b3c8f5); border: 1px solid #c7d6f6; border-radius: 2px; display: block; }
.combo svg { display: block; width: 11px; height: 14px; }
.combo.dis { background: #f0eee3; color: #aca899; border: 1px solid #fff; }
.combo.dis b { background: #e2e0d4; border-color: #d8d6c8; }
.cw79 { width: 79px; }
.cw56 { width: 56px; }
.cw55 { width: 55px; }
.cw68 { width: 68px; }
.tab { height: 22px; flex: none; display: flex; align-items: center; gap: 4px; padding-left: 3px; border: 1px solid #8aa0c0; border-radius: 3px; background: linear-gradient(#fdfcf8, #eeecdf); }
.tab.g2 { gap: 3px; }
.tw50 { width: 50px; }
.tw74 { width: 74px; }
.tw51 { width: 51px; padding-left: 6px; gap: 2px; border-right-color: #eeecdf; background: #fbfbf7; }

/* main */
.main { flex: 1; min-height: 0; display: flex; align-items: flex-start; }
.nav { width: 200px; height: 628px; flex: none; overflow: hidden; padding-top: 2px; }
.cap { height: 14px; display: flex; align-items: center; background: #0a50d0; color: #fff; font-size: 12.500px; line-height: 14px; width: 198px; }
.cap-t { flex: 1; white-space: nowrap; overflow: hidden; }
.pin { width: 10px; height: 12px; margin-right: 9px; color: #fff; flex: none; }
.cls { width: 9px; height: 9px; margin-right: 3px; color: #fff; flex: none; }
.navbtn { height: 21px; margin-left: 1px; width: 197px; line-height: 20px; text-align: center; background: #ece9d8; border: 1px solid; border-color: #fbfaf4 #8c8a7c #8c8a7c #fbfaf4; border-radius: 2px; }
.nb-first { margin-top: 3px; }
.nb-second { margin-top: 1px; height: 20px; }
.nb-third { margin-top: 1px; }
.nb-fourth { margin-top: 1px; }
.treetb { height: 29px; display: flex; align-items: flex-start; gap: 8px; padding: 8px 0 0 8px; background: #ece9d8; }
.sq { width: 15px; height: 15px; background: linear-gradient(#d8e3fb, #b8cbf5); border: 1px solid #c8d6f5; color: #2a68b8; font: bold 16px/13px "Liberation Sans", sans-serif; text-align: center; }
.treebox { width: 196px; height: 506px; margin-left: 2px; display: flex; background: #fff; border: 1px solid #7f9db9; border-width: 1px 1px 2px; overflow: hidden; }
.tree { position: relative; flex: 1; min-width: 0; overflow: hidden; padding-top: 1px; white-space: nowrap; }
.tree::before { content: ""; position: absolute; left: 12px; top: 9px; bottom: 0; border-left: 1px dotted #808080; }
.node, .leaf { position: relative; height: 16px; display: flex; align-items: center; }
.node { padding-left: 8px; }
.exp { position: relative; width: 10px; height: 10px; border: 1px solid #7f9db9; border-radius: 1px; background: linear-gradient(#fff, #d6d3c2); }
.exp::before { content: ""; position: absolute; left: 1px; top: 3px; width: 6px; height: 2px; background: #000; }
.exp.plus::after { content: ""; position: absolute; left: 3px; top: 1px; width: 2px; height: 6px; background: #000; }
.fold { margin-left: 5px; margin-right: 5px; }
.kids { position: relative; }
.kids::before { content: ""; position: absolute; left: 31px; top: 0; bottom: 8px; border-left: 1px dotted #808080; }
.leaf { padding-left: 43px; }
.leaf::before { content: ""; position: absolute; left: 32px; top: 8px; width: 10px; border-top: 1px dotted #808080; }
.leaf .ic { margin-right: 4px; position: relative; background: #fff; }
.hl { background: #ece9d8; padding-right: 6px; padding-left: 2px; margin-left: -2px; height: 15px; }
.sb { width: 16px; flex: none; display: flex; flex-direction: column; padding: 1px 0 1px 1px; background: linear-gradient(90deg, #f3f1e6, #fbfaf5); }
.sb-btn { height: 16px; flex: none; background: linear-gradient(#dbe5fb, #b8cbf5); border: 1px solid #e8eefc; border-radius: 2px; }
.sb-btn svg { width: 13px; height: 14px; display: block; }
.sb-thumb { margin-top: 174px; height: 211px; flex: none; display: flex; align-items: center; justify-content: center; background: linear-gradient(90deg, #c8d8fb, #b6cbf7); border: 1px solid #e8eefc; border-radius: 2px; }
.sb-thumb i { width: 7px; height: 7px; background: repeating-linear-gradient(#eef3ff 0 1px, #8ba5d8 1px 2px); }
.sb-down { margin-top: auto; margin-bottom: 1px; }

/* list panel */
.list { width: 195px; height: 628px; margin-left: 3px; flex: none; overflow: hidden; padding-top: 2px; }
.list .cap { width: 195px; padding-left: 1px; }
.listtb { height: 26px; display: flex; align-items: center; padding-left: 3px; padding-top: 3px; white-space: nowrap; }
.newbtn { width: 57px; height: 22px; display: flex; align-items: center; padding-left: 6px; background: #dcd9c7; border: 1px solid #cfccb8; border-radius: 3px; flex: none; }
.searchrow { height: 27px; display: flex; align-items: flex-start; padding: 7px 0 0 0; }
.search { margin-top: -6px; width: 169px; height: 25px; background: #fff; border: 1px solid #7f9db9; margin-left: 1px; flex: none; }
.listbox { height: 255px; margin-left: 2px; width: 192px; background: #fff; border: 1px solid #7f9db9; margin-top: 1px; }
.listhead { height: 23px; background: #f3f1e7; border-bottom: 1px solid #dedbc8; }
.cap-light { margin-top: 7px; background: #ece9d8; color: #000; border: 1px solid #a9a797; border-width: 1px 1px 1px 0; height: 15px; }
.cap-light .pin, .cap-light .cls { color: #111; }
.propbox { margin: 2px 0 0 2px; width: 192px; height: 280px; background: #fff; border: 1px solid #7f9db9; }

/* work area */
.work { width: 798px; height: 628px; margin-left: 2px; flex: none; display: flex; flex-direction: column; overflow: hidden; }
.stage { height: 562px; flex: none; display: flex; background: #000; }
.strip { width: 28px; flex: none; display: flex; flex-direction: column; align-items: center; background: #ece9d8; }
.hgrip { width: 18px; height: 2px; background: repeating-linear-gradient(90deg, #8f8d7e 0 2px, transparent 2px 4px); }
.hsep { width: 20px; height: 1px; background: #c5c2ad; }
.vt { writing-mode: vertical-rl; line-height: 12px; height: 24px; }
.lcaret { width: 0; height: 0; border: 3px solid transparent; border-right: 4px solid #000; border-left: 0; }
.dchev { margin-top: auto; margin-bottom: 4px; font: bold 12px/10px "Liberation Sans", sans-serif; transform: rotate(90deg); }
.cad { display: block; flex: none; background: #000; }
.cad path { fill: none; stroke-width: 1; shape-rendering: crispEdges; }
.cad .floor { fill: #a3a3a3; stroke: none; }
.pink { fill: #c8a0c8; }
.cad .gl { stroke: #008000; }
.cad .tick { shape-rendering: auto; }
.cad .rl { stroke: #ff0000; }
.cad .dl { stroke: #800000; }
.circ circle { fill: none; stroke: #008000; stroke-width: 1; }
.lbl text { font: 14.500px "Liberation Sans", sans-serif; fill: #d0d0d0; text-anchor: middle; }
.lbl.dim text { fill: #6e6e6e; }
.cad .ax-g { stroke: #00ff00; stroke-width: 4; }
.cad .ax-r { stroke: #ff0000; stroke-width: 4; }
.cad .fill-g { fill: #00ff00; stroke: none; shape-rendering: auto; }
.cad .fill-r { fill: #ff0000; stroke: none; shape-rendering: auto; }
.fill-b { fill: #0a78ff; }
.ax { font: 13px "Liberation Sans", sans-serif; text-anchor: middle; }
.ax-y { fill: #00e000; }
.ax-x { fill: #ff2020; }
.ax-z { fill: #2080ff; }

/* status bar */
.status { height: 27px; flex: none; display: flex; align-items: center; white-space: nowrap; background: #f0eee2; }
.lab { width: 14px; flex: none; font-size: 11px; }
.deg { width: 5px; flex: none; }
.num { height: 18px; flex: none; background: #f6f5ec; border: 1px solid #e0dece; color: #aca899; text-align: right; padding-right: 3px; line-height: 16px; }
.nw40 { width: 40px; }
.nw51 { width: 51px; }
.step { width: 15px; height: 16px; flex: none; background: #dfddd0; border: 1px solid #f4f3ea; }
.check { width: 13px; height: 13px; background: #fff; border: 1px solid #3c5e96; }
.mlbig { margin-left: 96px; }

/* overlays */
.drop { position: absolute; left: 206px; top: 89px; width: 160px; height: 126px; padding-top: 2px; background: #fff; border: 1px solid #8a8a80; box-shadow: 2px 2px 2px rgba(80, 80, 80, .55); }
.drop-i { height: 19.800px; line-height: 19px; padding-left: 25px; white-space: nowrap; }
.marks { position: absolute; left: 0; top: -2px; pointer-events: none; }
.marks path, .marks ellipse { fill: none; stroke: #ff0000; stroke-width: 3; }
.ime { position: absolute; left: 1121px; top: 642px; width: 80px; height: 36px; padding: 3px 0 0 3px; background: #ffb4c8; border: 1px solid #f49ab2; border-radius: 8px 0 0 0; }
.ime-in { height: 30px; display: flex; align-items: center; padding-left: 7px; gap: 7px; background: linear-gradient(#ffe9ef, #ffd3df); border-radius: 6px 0 0 0; }
.ime-s { width: 18px; height: 20px; flex: none; margin-right: 1px; }
.ime-t { font-size: 15px; color: #f26a8e; flex: none; }
.ime-last { margin-left: 3px; }
```
